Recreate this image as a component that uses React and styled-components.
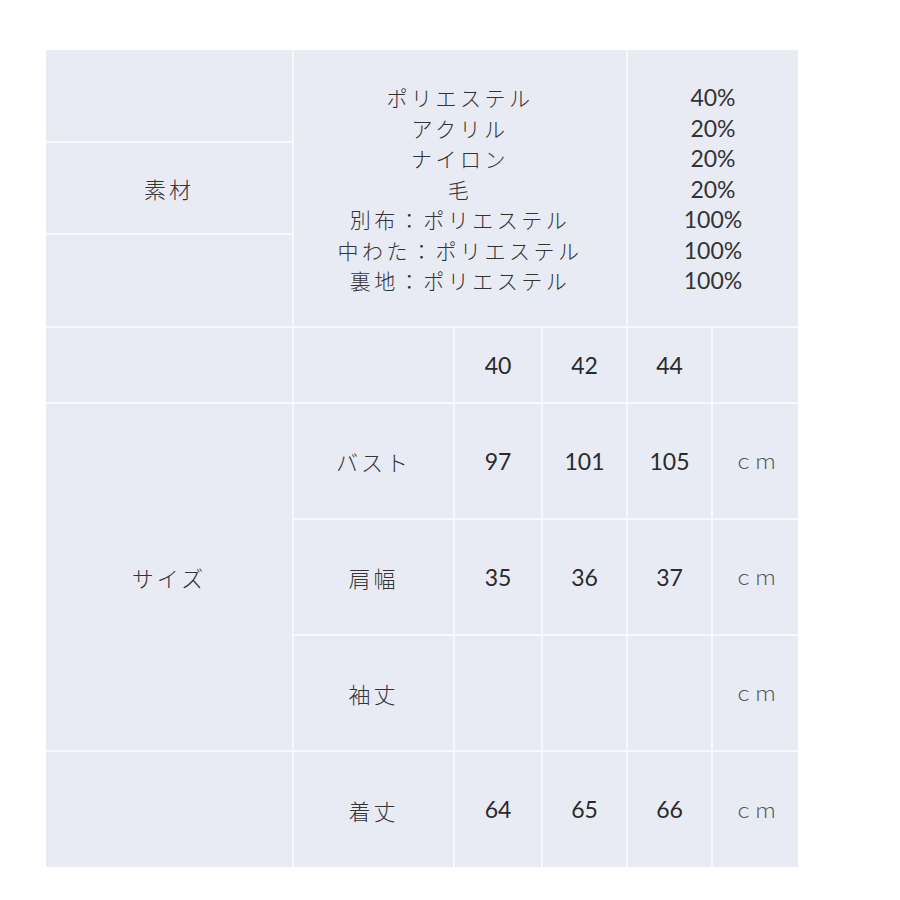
import React from "react";
import styled, { createGlobalStyle } from "styled-components";

const GlobalStyle = createGlobalStyle`
  body {
    margin: 0;
    background: #ffffff;
    font-family: "Noto Sans CJK JP", "Noto Sans", sans-serif;
  }
`;

const Page = styled.div`
  padding: 50px 0 0 46px;
`;

const Table = styled.div`
  display: grid;
  width: 752px;
  grid-template-columns: 246px 159px 86px 83px 83px 85px;
  grid-template-rows: 91px 90px 91px 74px 114px 114px 114px 115px;
  gap: 2px;
  background: #f7f8fb;
`;

const Cell = styled.div`
  grid-column: ${(p) => p.$col || "auto"};
  grid-row: ${(p) => p.$row || "auto"};
  background: #e9ebf4;
  display: flex;
  align-items: center;
  justify-content: center;
  color: #333;
`;

const Label = styled.span`
  font-family: "Noto Sans CJK JP", sans-serif;
  font-size: 22px;
  letter-spacing: 3px;
  font-weight: 300;
  line-height: 1;
`;

const Num = styled.span`
  font-family: Lato, "Noto Sans", sans-serif;
  font-size: 23px;
  color: #2a2a2a;
  line-height: 1;
`;

const Unit = styled.span`
  font-family: "Noto Sans CJK JP", sans-serif;
  font-size: 20px;
  font-weight: 300;
  color: #555;
  letter-spacing: 2px;
  line-height: 1;
`;

const List = styled.div`
  display: flex;
  flex-direction: column;
  align-items: center;
  padding-top: 2px;
`;

const ListLine = styled.div`
  height: 30.5px;
  line-height: 30.5px;
  font-size: ${(p) => (p.$num ? "23px" : "21px")};
  font-weight: ${(p) => (p.$num ? 400 : 300)};
  font-family: ${(p) =>
    p.$num ? 'Lato, "Noto Sans", sans-serif' : '"Noto Sans CJK JP", sans-serif'};
  letter-spacing: ${(p) => (p.$num ? "0" : "3.5px")};
  white-space: nowrap;
`;

const materials = [
  ["ポリエステル", "40%"],
  ["アクリル", "20%"],
  ["ナイロン", "20%"],
  ["毛", "20%"],
  ["別布：ポリエステル", "100%"],
  ["中わた：ポリエステル", "100%"],
  ["裏地：ポリエステル", "100%"],
];

const sizes = [
  { row: 5, name: "バスト", vals: ["97", "101", "105"] },
  { row: 6, name: "肩幅", vals: ["35", "36", "37"] },
  { row: 7, name: "袖丈", vals: ["", "", ""] },
  { row: 8, name: "着丈", vals: ["64", "65", "66"] },
];

export default function App() {
  return (
    <Page>
      <GlobalStyle />
      <Table>
        <Cell $col="1" $row="1" />
        <Cell $col="1" $row="2">
          <Label>素材</Label>
        </Cell>
        <Cell $col="1" $row="3" />
        <Cell $col="2 / 5" $row="1 / 4">
          <List>
            {materials.map(([m]) => (
              <ListLine key={m}>{m}</ListLine>
            ))}
          </List>
        </Cell>
        <Cell $col="5 / 7" $row="1 / 4">
          <List>
            {materials.map(([m, p]) => (
              <ListLine key={m} $num>
                {p}
              </ListLine>
            ))}
          </List>
        </Cell>

        <Cell $col="1" $row="4" />
        <Cell $col="2" $row="4" />
        <Cell $col="3" $row="4">
          <Num>40</Num>
        </Cell>
        <Cell $col="4" $row="4">
          <Num>42</Num>
        </Cell>
        <Cell $col="5" $row="4">
          <Num>44</Num>
        </Cell>
        <Cell $col="6" $row="4" />

        <Cell $col="1" $row="5 / 8">
          <Label>サイズ</Label>
        </Cell>
        <Cell $col="1" $row="8" />

        {sizes.map((s) => (
          <React.Fragment key={s.name}>
            <Cell $col="2" $row={s.row}>
              <Label>{s.name}</Label>
            </Cell>
            {s.vals.map((v, i) => (
              <Cell key={i} $col={String(3 + i)} $row={s.row}>
                <Num>{v}</Num>
              </Cell>
            ))}
            <Cell $col="6" $row={s.row}>
              <Unit>ｃｍ</Unit>
            </Cell>
          </React.Fragment>
        ))}
      </Table>
    </Page>
  );
}
